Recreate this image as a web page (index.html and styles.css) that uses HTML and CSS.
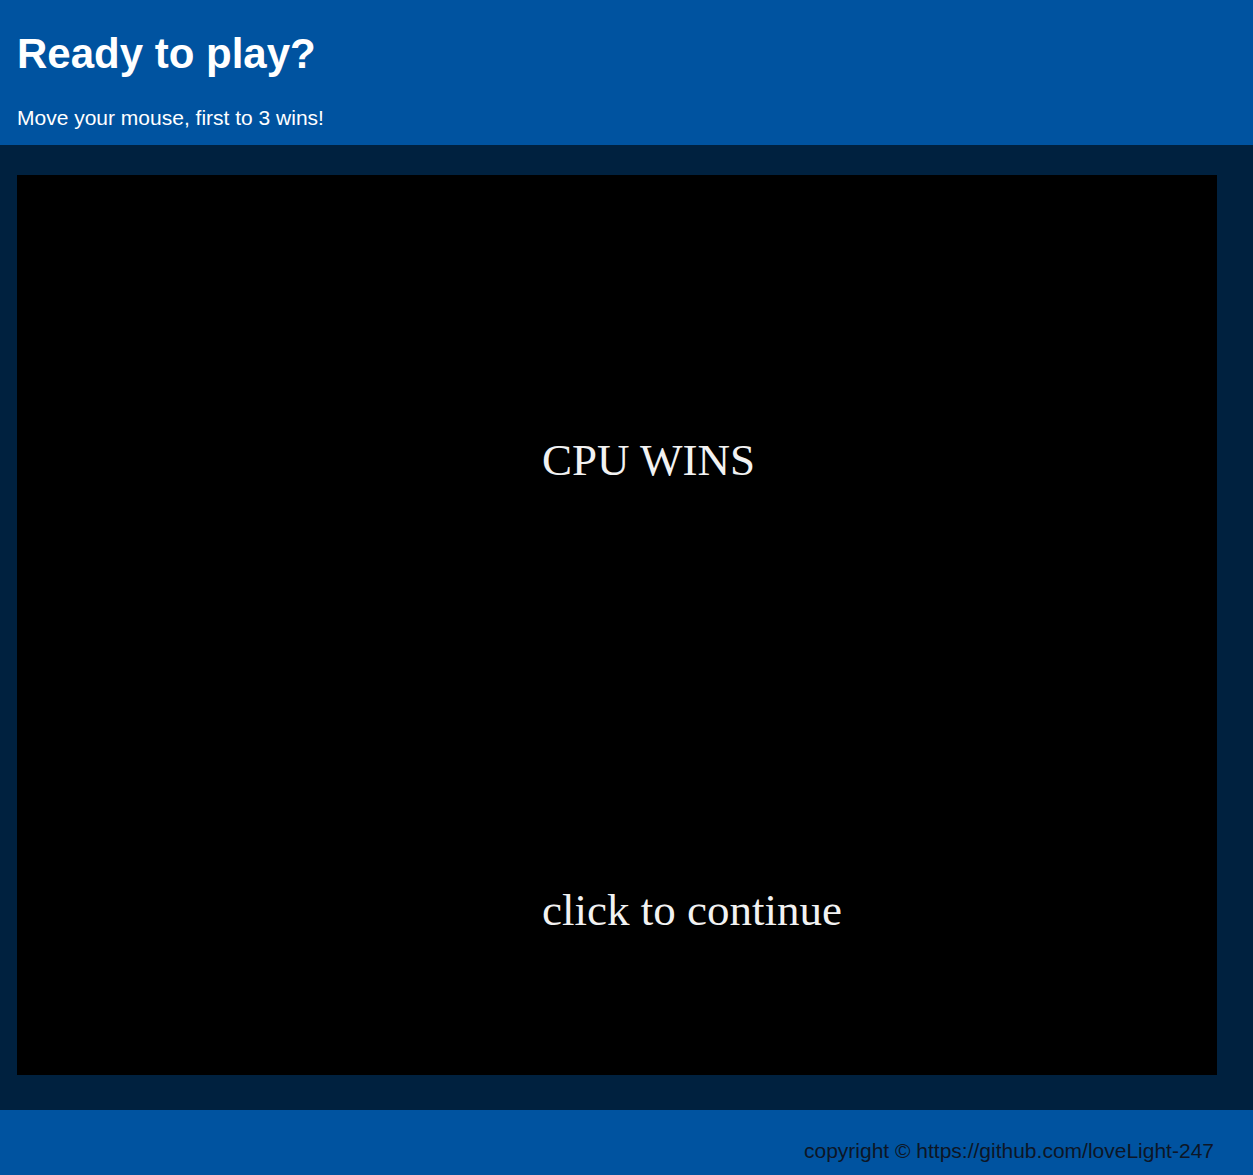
FILE: index.html
```html
<!DOCTYPE html>
<html lang="en">
<head>
<meta charset="utf-8">
<title>Ready to play?</title>
<link rel="stylesheet" href="styles.css">
</head>
<body>
<header class="top">
  <h1 class="title">Ready to play?</h1>
  <p class="subtitle">Move your mouse, first to 3 wins!</p>
</header>
<main class="stage">
  <div class="board">
    <span class="msg msg-result">CPU WINS</span>
    <span class="msg msg-continue">click to continue</span>
  </div>
</main>
<footer class="bottom">
  <p class="copy">copyright © https://github.com/loveLight-247</p>
</footer>
</body>
</html>
```
FILE: styles.css
```css
html, body {
  margin: 0;
  padding: 0;
}
body {
  font-family: "Liberation Sans", Arial, sans-serif;
  font-size: 21px;
  background: #00213f;
}
.top {
  background: #0053a0;
  color: #ffffff;
  height: 145px;
  box-sizing: border-box;
  padding: 30px 17px 0 17px;
}
.title {
  margin: 0;
  font-size: 42px;
  line-height: 48px;
  font-weight: bold;
}
.subtitle {
  margin: 28px 0 0 0;
  line-height: 24px;
}
.stage {
  background: #00213f;
  padding: 30px 36px 35px 17px;
}
.board {
  position: relative;
  width: 1200px;
  height: 900px;
  background: #000000;
}
.msg {
  position: absolute;
  left: 525px;
  font-family: "Liberation Serif", "Times New Roman", serif;
  font-size: 45px;
  line-height: 45px;
  color: #f2f2f2;
  white-space: nowrap;
}
.msg-result {
  top: 263px;
}
.msg-continue {
  top: 713px;
}
.bottom {
  background: #0053a0;
  height: 65px;
  box-sizing: border-box;
  padding: 29px 39px 0 17px;
}
.copy {
  margin: 0;
  text-align: right;
  line-height: 24px;
  color: #0d1626;
}
```
